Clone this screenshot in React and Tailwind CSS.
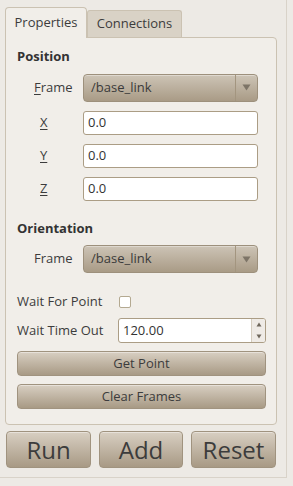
import React from "react";

const Combo = ({ value }) => (
  <div className="flex h-[28px] w-[175px] items-center rounded-[4px] border border-[#9d907c] bg-gradient-to-b from-[#cdc4b6] to-[#a99b86] shadow-[inset_0_1px_0_rgba(255,255,255,0.35)]">
    <span className="flex-1 pl-[7px] text-[13px] text-[#3a3a3a]">{value}</span>
    <span className="flex h-full w-[22px] items-center justify-center border-l border-[#a3957f]">
      <svg width="9" height="7" viewBox="0 0 9 7">
        <path d="M0.5 0.5 L8.5 0.5 L4.5 6.5 Z" fill="#7d7467" />
      </svg>
    </span>
  </div>
);

const Field = ({ label, value }) => (
  <div className="flex h-[23px] items-center">
    <span className="w-[66px] pl-[23px] text-[13px] text-[#3c3c3c]">
      <span className="underline underline-offset-[2px]">{label}</span>
    </span>
    <div className="flex h-[24px] w-[175px] items-center rounded-[3px] border border-[#ab9d85] bg-white pl-[4px] text-[13px] text-[#333]">
      {value}
    </div>
  </div>
);

const Btn = ({ children, className = "" }) => (
  <div
    className={
      "flex items-center justify-center rounded-[4px] border border-[#a0937f] bg-gradient-to-b from-[#d8cfc2] to-[#a89a85] text-[#3c3c3c] shadow-[inset_0_1px_0_rgba(255,255,255,0.4)] " +
      className
    }
  >
    {children}
  </div>
);

export default function App() {
  return (
    <div className="h-[486px] w-[293px] bg-[#edeae5] font-['Open_Sans',sans-serif]">
      <div className="h-[478px] w-[287px] border-b border-r border-[#d9d3c9] pl-[5px] pt-[7px]">
        {/* tabs */}
        <div className="flex h-[30px] items-end">
          <div className="relative z-10 -mb-px flex h-[31px] w-[82px] items-center justify-center rounded-t-[4px] border border-b-0 border-[#cbc2b2] bg-[#f1eee9] text-[13px] text-[#3c3c3c]">
            Properties
          </div>
          <div className="flex h-[27px] w-[95px] items-center justify-center rounded-t-[3px] border border-b-0 border-[#cbc2b2] bg-[#d9d2c6] text-[13px] text-[#3c3c3c]">
            Connections
          </div>
        </div>

        {/* pane */}
        <div className="h-[388px] w-[272px] rounded-b-[4px] rounded-tr-[4px] border border-[#cbc2b2] bg-[#f1eee9] pl-[11px] pt-[9px]">
          <div className="text-[13px] font-bold text-[#333]">Position</div>

          <div className="mt-[7px] flex h-[28px] items-center">
            <span className="w-[66px] pl-[17px] text-[13px] text-[#3c3c3c]">
              <span className="underline underline-offset-[2px]">F</span>rame
            </span>
            <Combo value="/base_link" />
          </div>

          <div className="mt-[10px] flex flex-col gap-[10px]">
            <Field label="X" value="0.0" />
            <Field label="Y" value="0.0" />
            <Field label="Z" value="0.0" />
          </div>

          <div className="mt-[18px] text-[13px] font-bold text-[#333]">Orientation</div>

          <div className="mt-[7px] flex h-[28px] items-center">
            <span className="w-[66px] pl-[17px] text-[13px] text-[#3c3c3c]">Frame</span>
            <Combo value="/base_link" />
          </div>

          <div className="mt-[20px] flex h-[18px] items-center text-[13px] text-[#3c3c3c]">
            <span className="w-[102px]">Wait For Point</span>
            <span className="h-[12px] w-[12px] rounded-[2px] border border-[#b4a991] bg-white" />
          </div>

          <div className="mt-[7px] flex h-[25px] items-center text-[13px] text-[#3c3c3c]">
            <span className="w-[101px]">Wait Time Out</span>
            <div className="flex h-[25px] w-[148px] overflow-hidden rounded-[3px] border border-[#ab9d85] bg-white">
              <span className="flex flex-1 items-center pl-[4px] text-[#333]">120.00</span>
              <span className="flex w-[14px] flex-col items-center justify-between border-l border-[#d5cdbf] bg-[#efebe6] py-[3px]">
                <svg width="6" height="5" viewBox="0 0 6 5">
                  <path d="M3 0.5 L5.5 4.5 L0.5 4.5 Z" fill="#6f675c" />
                </svg>
                <svg width="6" height="5" viewBox="0 0 6 5">
                  <path d="M0.5 0.5 L5.5 0.5 L3 4.5 Z" fill="#6f675c" />
                </svg>
              </span>
            </div>
          </div>

          <Btn className="mt-[8px] h-[25px] w-[249px] text-[13px]">Get Point</Btn>
          <Btn className="mt-[8px] h-[25px] w-[249px] text-[13px]">Clear Frames</Btn>
        </div>

        {/* bottom buttons */}
        <div className="mt-[6px] flex gap-[8px] pl-[1px]">
          <Btn className="h-[37px] w-[85px] text-[24px]">Run</Btn>
          <Btn className="h-[37px] w-[84px] text-[24px]">Add</Btn>
          <Btn className="h-[37px] w-[85px] text-[24px]">Reset</Btn>
        </div>
      </div>
    </div>
  );
}
